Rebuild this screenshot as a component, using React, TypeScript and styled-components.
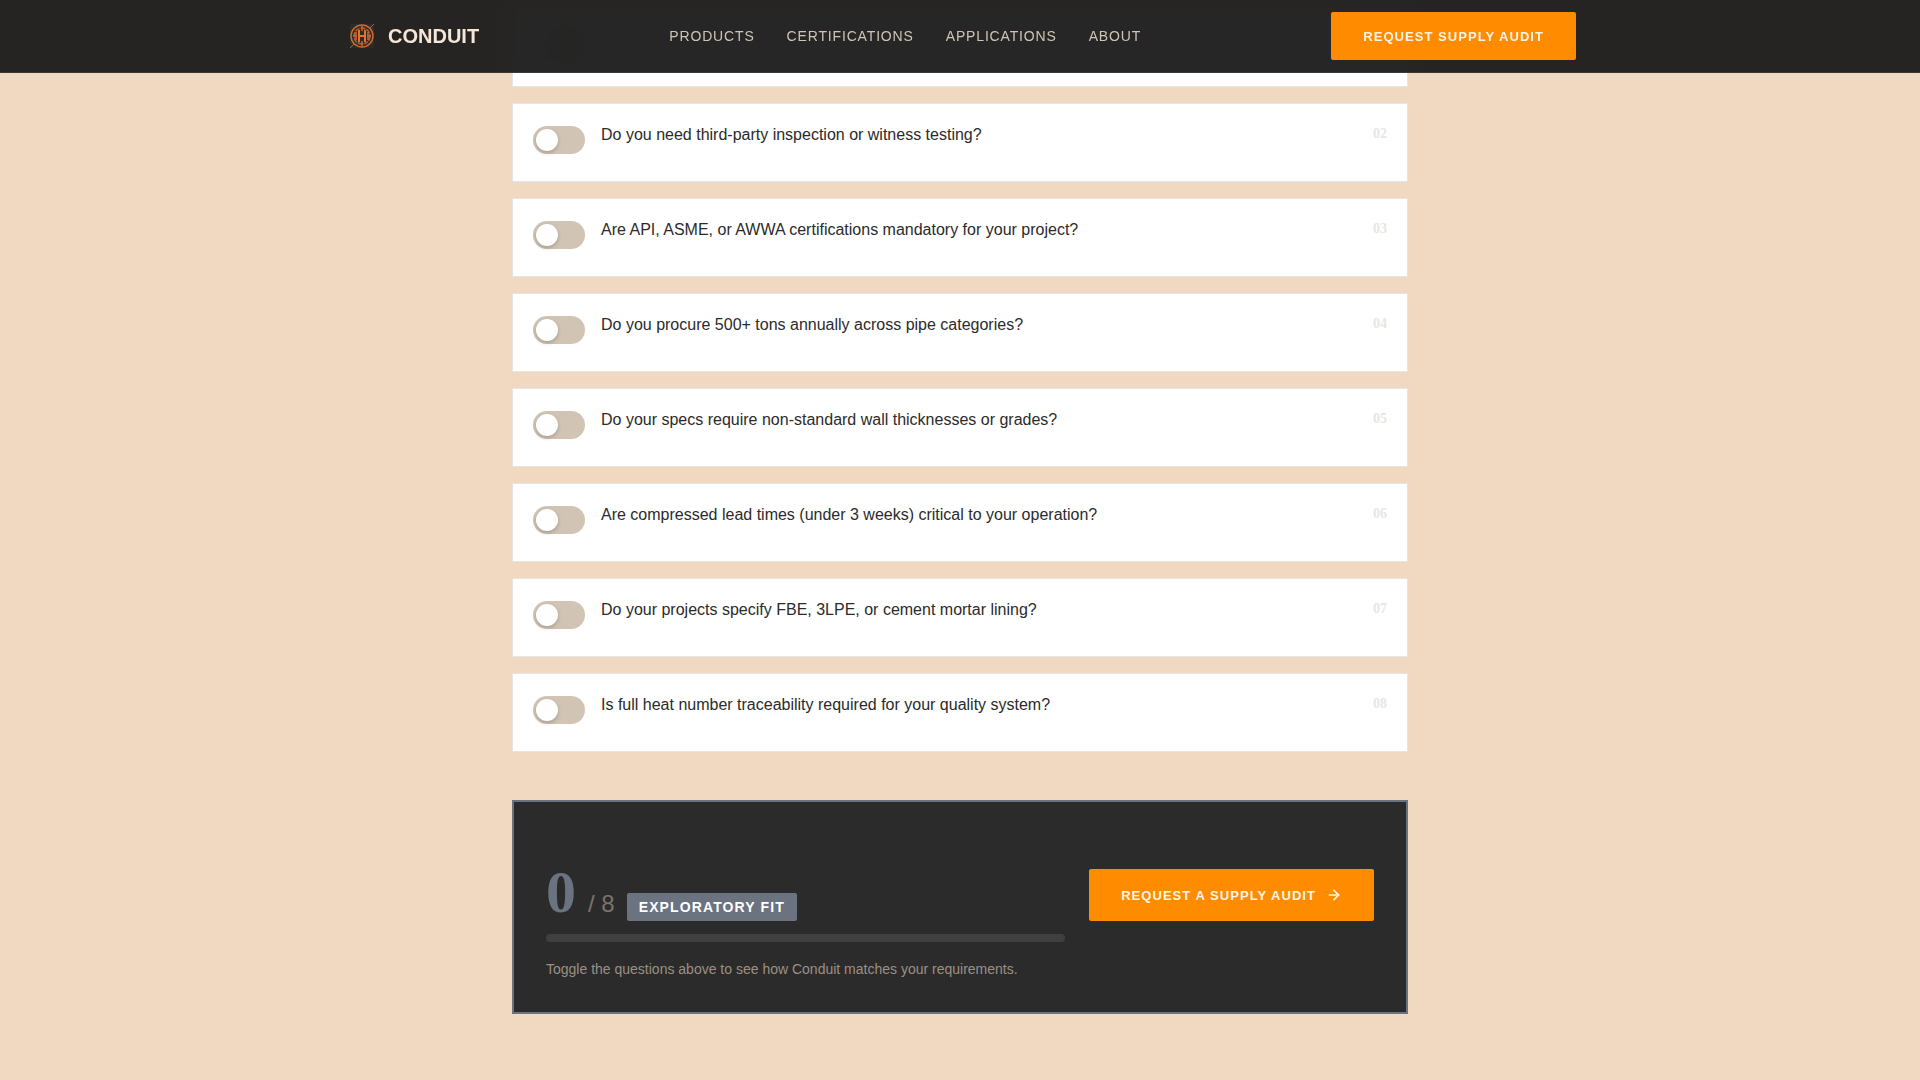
import React, { useState } from "react";
import styled, { createGlobalStyle } from "styled-components";
import { ArrowRight } from "lucide-react";

const sans = `"Liberation Sans", Arial, sans-serif`;
const serif = `"Liberation Serif", "Times New Roman", serif`;

const GlobalStyle = createGlobalStyle`
  *, *::before, *::after { box-sizing: border-box; }
  body {
    margin: 0;
    background: #f0d9c0;
    color: #2b2b2b;
    font-family: ${sans};
    font-size: 16px;
  }
`;

const Header = styled.header`
  position: fixed;
  inset: 0 0 auto;
  z-index: 10;
  background: rgba(26, 26, 26, 0.95);
  backdrop-filter: blur(12px);
  border-bottom: 1px solid #3a3a3a;
`;

const HeaderInner = styled.div`
  display: flex;
  align-items: center;
  justify-content: space-between;
  max-width: 1280px;
  margin: 0 auto;
  padding: 12px 24px;
`;

const Brand = styled.a`
  display: flex;
  align-items: center;
  gap: 8px;
  color: #f5e6d8;
  font-size: 20px;
  font-weight: 700;
  text-decoration: none;
`;

const Nav = styled.nav`
  display: flex;
  gap: 32px;
`;

const NavLink = styled.a`
  color: #d0c4b4;
  font-size: 14px;
  line-height: 20px;
  letter-spacing: 0.06em;
  text-decoration: none;
  text-transform: uppercase;
`;

const CtaButton = styled.button<{ $tall?: boolean }>`
  display: inline-flex;
  align-items: center;
  justify-content: center;
  gap: 10px;
  min-height: ${(p) => (p.$tall ? 52 : 48)}px;
  padding: 0 32px;
  border: 0;
  border-radius: 2px;
  background: #ff8c00;
  color: #fff5e6;
  font-family: ${sans};
  font-size: 13px;
  font-weight: 700;
  letter-spacing: 0.08em;
  text-transform: uppercase;
  white-space: nowrap;
  cursor: pointer;
`;

const Main = styled.main`
  max-width: 944px;
  margin: 0 auto;
  padding: 8px 24px 66px;
`;

const QuestionList = styled.ul`
  display: grid;
  gap: 16px;
  margin: 0 0 48px;
  padding: 0;
  list-style: none;
`;

const QuestionCard = styled.li`
  display: flex;
  align-items: flex-start;
  gap: 16px;
  min-height: 79px;
  padding: 20px;
  border: 1px solid #e5e5e5;
  background: #ffffff;
`;

const Toggle = styled.input`
  appearance: none;
  flex: none;
  display: flex;
  align-items: center;
  width: 52px;
  height: 28px;
  margin: 2px 0 0;
  padding: 3px;
  border-radius: 14px;
  background: #d1c4b4;
  cursor: pointer;

  &::before {
    content: "";
    width: 22px;
    height: 22px;
    border-radius: 50%;
    background: #ffffff;
    box-shadow: 0 2px 4px rgba(0, 0, 0, 0.2);
  }

  &:checked {
    justify-content: flex-end;
    background: #ff8c00;
  }
`;

const QuestionLabel = styled.label`
  flex: 1;
  line-height: 22px;
  cursor: pointer;
`;

const QuestionNumber = styled.span`
  color: #e8e6e3;
  font-family: ${serif};
  font-size: 14px;
  font-weight: 700;
  line-height: 20px;
`;

const Result = styled.section`
  display: grid;
  grid-template-columns: 1fr auto;
  grid-template-rows: minmax(87px, auto);
  align-items: end;
  column-gap: 24px;
  padding: 32px;
  border: 2px solid #6b7280;
  background: #2b2b2b;
`;

const ScoreRow = styled.div`
  display: flex;
  align-items: baseline;
  gap: 12px;
`;

const Score = styled.span`
  color: #6b7280;
  font-family: ${serif};
  font-size: 60px;
  font-weight: 700;
  line-height: 56px;
`;

const Total = styled.span`
  color: #7d7368;
  font-size: 24px;
`;

const Badge = styled.span`
  padding: 0 12px;
  border-radius: 2px;
  background: #6b7280;
  color: #ffffff;
  font-size: 14px;
  font-weight: 700;
  line-height: 28px;
  letter-spacing: 0.08em;
  text-transform: uppercase;
`;

const Track = styled.div`
  grid-column: 1;
  height: 8px;
  margin: 13px 0 16px;
  border-radius: 4px;
  background: #404040;
  overflow: hidden;
`;

const Fill = styled.div`
  height: 100%;
  background: #ff8c00;
`;

const Hint = styled.p`
  grid-column: 1;
  margin: 0;
  color: #9c9084;
  font-size: 14px;
  line-height: 22px;
`;

const navItems = ["Products", "Certifications", "Applications", "About"];

const questions = [
  "",
  "Do you need third-party inspection or witness testing?",
  "Are API, ASME, or AWWA certifications mandatory for your project?",
  "Do you procure 500+ tons annually across pipe categories?",
  "Do your specs require non-standard wall thicknesses or grades?",
  "Are compressed lead times (under 3 weeks) critical to your operation?",
  "Do your projects specify FBE, 3LPE, or cement mortar lining?",
  "Is full heat number traceability required for your quality system?",
];

function Emblem() {
  return (
    <svg width="36" height="36" viewBox="0 0 36 36" fill="none" aria-hidden="true">
      <rect x="6" y="6" width="24" height="24" fill="#302b28" />
      <path d="M6 30l4-4M26 10l4-4" stroke="#77706a" />
      <circle cx="18" cy="18" r="11" stroke="#cc682f" strokeWidth="1.5" />
      <circle cx="18" cy="18" r="8" stroke="#b85f30" strokeWidth="1.5" strokeDasharray="5 1" />
      <path d="M15 12v12M21 12v12M15 18h6" stroke="#e07531" strokeWidth="2" />
      <path
        d="M18 8v5M18 23v5M9 18h4M23 18h4M12 14v8M24 14v8"
        stroke="#c9672f"
        strokeWidth="1.5"
      />
    </svg>
  );
}

export default function App() {
  const [answers, setAnswers] = useState<boolean[]>(questions.map(() => false));
  const score = answers.filter(Boolean).length;

  const toggle = (index: number) =>
    setAnswers((current) => current.map((value, i) => (i === index ? !value : value)));

  return (
    <>
      <GlobalStyle />
      <Header>
        <HeaderInner>
          <Brand href="#">
            <Emblem />
            CONDUIT
          </Brand>
          <Nav>
            {navItems.map((item) => (
              <NavLink key={item} href={`#${item.toLowerCase()}`}>
                {item}
              </NavLink>
            ))}
          </Nav>
          <CtaButton type="button">Request Supply Audit</CtaButton>
        </HeaderInner>
      </Header>
      <Main>
        <QuestionList>
          {questions.map((question, index) => (
            <QuestionCard key={index}>
              <Toggle
                type="checkbox"
                role="switch"
                id={`question-${index}`}
                aria-label={question || "Question 1"}
                checked={answers[index]}
                onChange={() => toggle(index)}
              />
              {question && (
                <>
                  <QuestionLabel htmlFor={`question-${index}`}>{question}</QuestionLabel>
                  <QuestionNumber>{String(index + 1).padStart(2, "0")}</QuestionNumber>
                </>
              )}
            </QuestionCard>
          ))}
        </QuestionList>
        <Result>
          <ScoreRow>
            <Score>{score}</Score>
            <Total>/ {questions.length}</Total>
            <Badge>Exploratory Fit</Badge>
          </ScoreRow>
          <CtaButton type="button" $tall>
            Request a Supply Audit
            <ArrowRight size={16} strokeWidth={2.5} aria-hidden="true" />
          </CtaButton>
          <Track>
            <Fill style={{ width: `${(score / questions.length) * 100}%` }} />
          </Track>
          <Hint>Toggle the questions above to see how Conduit matches your requirements.</Hint>
        </Result>
      </Main>
    </>
  );
}
